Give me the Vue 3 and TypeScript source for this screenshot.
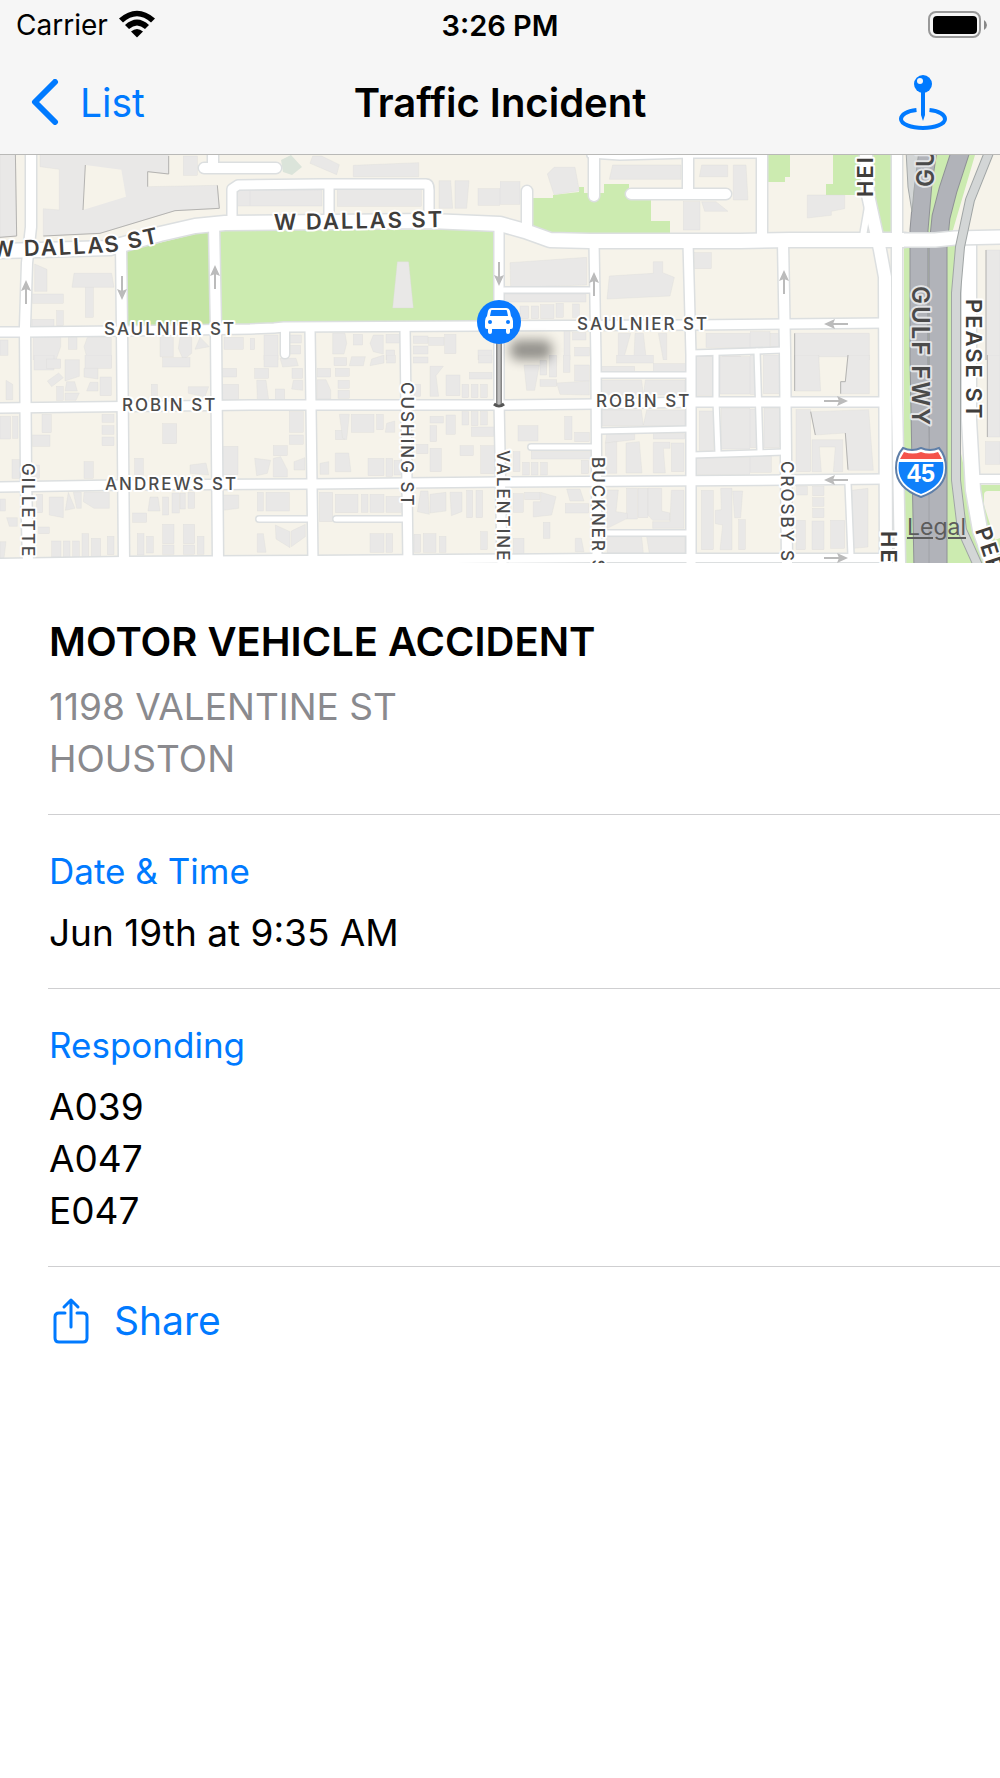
<script setup lang="ts">
interface Tile {
  x: number
  y: number
  rects: number[][]
  polys: string[]
}
interface Label {
  text: string
  x: number
  y: number
  angle: number
  kind: 'minor' | 'major' | 'freeway'
}
interface Road {
  d: string
  w: number
}

const incident = {
  type: 'MOTOR VEHICLE ACCIDENT',
  address: ['1198 VALENTINE ST', 'HOUSTON'],
  when: 'Jun 19th at 9:35 AM',
  units: ['A039', 'A047', 'E047'],
}

const roads: Road[] = [
  // minor lanes
  { d: 'M504 290H592', w: 5 },
  { d: 'M598 375H690', w: 5 },
  { d: 'M598 431L690 429', w: 5 },
  { d: 'M531 447H596', w: 5 },
  { d: 'M598 533H690', w: 5 },
  { d: 'M692 353L783 350', w: 5 },
  { d: 'M692 455L784 452', w: 5 },
  { d: 'M716 353V400L718 453', w: 5 },
  { d: 'M757 351L760 452', w: 5 },
  { d: 'M848 483L851 556', w: 5 },
  { d: 'M259 519H311', w: 5 },
  { d: 'M336 519H406', w: 5 },
  { d: 'M870 195L863 236', w: 6 },
  // east-west streets
  { d: 'M0 332H25L122 331L250 329L274 328L284 327L480 326L692 325L885 323', w: 9 },
  { d: 'M0 408L250 405L500 405L596 404L692 402H885', w: 9 },
  { d: 'M0 487L122 485L312 484L500 482L785 480L885 479', w: 9 },
  { d: 'M0 563L124 561L312 560L598 558L885 558', w: 8 },
  { d: 'M978 479H1000', w: 8 },
  { d: 'M590 155L620 157L690 155H762', w: 5 },
  // north-south streets
  { d: 'M31 155V227L27 263L25 327L26 480L28 563', w: 10 },
  { d: 'M121 243L122 330L124 563', w: 10 },
  { d: 'M214 224L216 330L218 563', w: 10 },
  { d: 'M310 328L313 563', w: 9 },
  { d: 'M285 330V354', w: 8 },
  { d: 'M405 328L408 563', w: 9 },
  { d: 'M499 224V400L502 563', w: 9 },
  { d: 'M594 242L596 360L597 563', w: 9 },
  { d: 'M688 242L691 355V563', w: 9 },
  { d: 'M762 155V240', w: 10 },
  { d: 'M783 242L785 350L787 563', w: 10 },
  // loops and dead ends
  { d: 'M204 168H276M213 155V168', w: 10 },
  { d: 'M232 223V189L238 185L320 184H426Q429 184 429 190V222M329 184V222', w: 9 },
  { d: 'M527 191V232', w: 10 },
  { d: 'M594 155V196', w: 10 },
  { d: 'M631 194H726M688 155V194', w: 10 },
  // main streets
  { d: 'M866 155L868 195L880 250L885 277L886 563', w: 12 },
  { d: 'M897 155V400L900 563', w: 10 },
  { d: 'M969 240V420L973 490L980 530L992 563', w: 14 },
  { d: 'M-5 251L40 250L110 248L160 234L195 226L225 223L430 221L500 224L525 231L550 240L590 241H740L790 240H905', w: 14 },
]

const tiles: Tile[] = [
  {
    x: 0, y: 150,
    rects: [[550, 18, 42, 58], [710, 122, 40, 46], [98, 432, 92, 28], [170, 482, 20, 45], [96, 508, 66, 22], [256, 410, 24, 92], [0, 570, 24, 46], [205, 562, 26, 36], [672, 562, 58, 36]],
    polys: ['M0 0H46L50 258L0 262z', 'M120 0H506V72L443 65V110L652 106L658 175L525 182L300 250L130 258V176L178 180V58L120 50z', 'M104 342L141 358V424H104z', 'M222 370H335L342 412H216z', 'M100 562H182V590L168 630H100z', 'M262 562H334V630H262L252 590z', 'M480 562H520V620H480z', 'M540 562H575V610L550 630L535 595z', 'M600 562L628 590L585 598z'],
  },
  {
    x: 250, y: 150,
    rects: [[0, 120, 216, 48], [262, 117, 252, 52], [684, 116, 66, 50], [0, 565, 14, 34], [42, 555, 42, 75], [118, 555, 36, 24], [122, 586, 30, 26], [310, 553, 28, 32], [408, 553, 40, 26], [408, 600, 26, 30], [490, 558, 44, 22], [490, 588, 44, 24], [536, 562, 46, 24], [584, 553, 34, 58], [684, 600, 42, 30]],
    polys: ['M188 18H215L268 44L260 74L180 40z', 'M310 46L506 38V80H310z', 'M567 92H602L608 175H567z', 'M615 92H657L650 175H615z', 'M442 335H476L490 474H428z', 'M248 550H285L290 580L282 612H248z', 'M370 555H400V612L370 605L360 580z'],
  },
  {
    x: 500, y: 150,
    rects: [[0, 95, 60, 68], [550, 155, 50, 85], [584, 308, 50, 48], [14, 432, 244, 24], [60, 468, 26, 38], [94, 468, 22, 38], [122, 464, 40, 42], [168, 460, 22, 42], [218, 462, 20, 40], [192, 545, 18, 85], [218, 548, 40, 22], [224, 592, 44, 26], [618, 550, 132, 42], [600, 618, 40, 12], [668, 618, 54, 12]],
    polys: ['M162 52H225L238 122L162 134L142 72z', 'M338 45H543V88H328z', 'M605 45H683V80H598z', 'M700 45H738L744 150H700z', 'M605 155H648L684 184H614z', 'M30 338L260 322V405L32 412z', 'M328 378L460 370V335H488V368L523 382L510 438L321 447z', 'M355 550H392L370 630H355z', 'M405 550H430L438 620H402z', 'M475 550H500V630H490z'],
  },
  {
    x: 750, y: 150,
    rects: [[708, 300, 42, 330], [0, 545, 60, 48], [62, 550, 26, 40]],
    polys: ['M172 135H284V176L244 184V196L172 204z', 'M134 550H358V630H294V620H206V630H134z'],
  },
  {
    x: 0, y: 355,
    rects: [[102, 0, 60, 45], [140, 12, 42, 28], [255, 0, 80, 40], [488, 8, 82, 28], [170, 94, 20, 42], [300, 66, 34, 56], [454, 88, 18, 40], [668, 40, 42, 26], [668, 88, 48, 46], [0, 184, 32, 68], [38, 184, 16, 66], [126, 178, 28, 55], [98, 240, 52, 34], [306, 178, 36, 24], [306, 212, 36, 26], [306, 246, 36, 26], [488, 206, 42, 60], [252, 320, 28, 50], [404, 310, 26, 52], [668, 274, 46, 85], [36, 314, 24, 56], [98, 330, 20, 40], [0, 432, 16, 36], [110, 418, 18, 55], [116, 516, 32, 20], [398, 474, 42, 28], [488, 426, 18, 54], [564, 412, 20, 48], [516, 414, 22, 60], [155, 558, 28, 48], [190, 558, 20, 48], [218, 558, 20, 48], [246, 536, 20, 70], [274, 550, 28, 56], [322, 544, 20, 55], [412, 536, 20, 64], [440, 544, 20, 50], [488, 508, 34, 58], [550, 508, 34, 58], [488, 570, 34, 28], [550, 570, 34, 28], [592, 544, 20, 54]],
    polys: ['M142 78L176 54L190 68L155 95z', 'M195 14H238V64L195 78z', 'M200 80H224L232 108H195z', 'M195 114H238L228 136H195z', 'M252 40H294V72L252 66z', 'M270 82H294V108H260z', 'M565 95H626L615 125L565 115z', 'M18 76L38 88V134H18z', 'M20 488H52V514H28z', 'M148 426H190V488L148 480z', 'M205 412L225 460L196 466z', 'M220 412H244V460H230z', 'M252 412H328V460H282L250 440z', 'M450 426H474L480 468H444z', 'M570 330L618 324L626 360L570 355z', 'M668 420H716V460L668 466z', 'M0 560H18L12 610H0z', 'M540 414H556V462H540z'],
  },
  {
    x: 250, y: 355,
    rects: [[42, 0, 42, 36], [252, 8, 38, 24], [410, 0, 26, 24], [490, 6, 44, 18], [686, 0, 40, 24], [14, 40, 42, 30], [126, 40, 32, 30], [76, 102, 28, 32], [202, 40, 40, 26], [256, 40, 42, 24], [264, 76, 34, 24], [264, 106, 34, 24], [588, 60, 42, 62], [658, 52, 68, 20], [636, 88, 20, 40], [664, 88, 20, 40], [692, 88, 20, 40], [492, 88, 20, 36], [118, 170, 42, 62], [118, 240, 42, 28], [304, 178, 68, 54], [380, 178, 20, 46], [256, 226, 30, 28], [540, 184, 40, 20], [588, 180, 28, 58], [540, 212, 20, 48], [636, 170, 20, 40], [664, 170, 20, 42], [692, 170, 20, 40], [664, 216, 68, 28], [630, 272, 40, 30], [692, 272, 42, 84], [540, 280, 34, 70], [500, 268, 34, 28], [70, 272, 42, 30], [354, 310, 48, 52], [408, 310, 20, 54], [432, 316, 22, 44], [22, 412, 18, 56], [48, 412, 70, 56], [208, 412, 40, 88], [256, 418, 68, 55], [334, 418, 20, 54], [360, 418, 42, 54], [408, 424, 46, 48], [650, 406, 18, 82], [678, 406, 20, 82], [360, 536, 42, 56], [408, 536, 20, 56], [492, 538, 20, 54], [520, 536, 38, 56], [568, 544, 20, 48], [692, 530, 20, 54]],
    polys: ['M90 10H138L145 32L98 36z', 'M305 5H346L340 32H298z', 'M365 12L402 0V24L360 32z', 'M20 76H48L56 134H22z', 'M130 76H158V106L125 102z', 'M202 74H228L242 105V132H202z', 'M540 34H580L558 62L566 124H540z', 'M268 178H298L290 254L278 250z', 'M410 205L434 198V232H406z', 'M14 310L62 316L52 355L20 362z', 'M70 310L92 305L112 344V366H70z', 'M132 320L165 308V345H132z', 'M256 294H296L303 350H256z', 'M210 325L236 320V358H210z', 'M76 510L120 530V578L78 552z', 'M124 528L166 508V545L124 575z', 'M22 536H40L48 592H22z', 'M512 408H534L538 478L502 470z', 'M540 418L588 412V468L540 474z', 'M600 412H636V470L604 482z'],
  },
  {
    x: 500, y: 355,
    rects: [[120, 16, 20, 44], [148, 0, 22, 66], [190, 0, 20, 52], [224, 30, 44, 48], [120, 74, 50, 20], [54, 212, 60, 46], [194, 184, 22, 70], [224, 232, 44, 28], [94, 290, 180, 22], [68, 322, 20, 38], [94, 322, 20, 38], [122, 322, 20, 38], [244, 316, 22, 40], [40, 290, 20, 60], [304, 34, 100, 18], [350, 0, 110, 24], [460, 26, 96, 24], [590, 5, 48, 116], [660, 5, 90, 112], [598, 168, 42, 118], [664, 160, 86, 122], [588, 308, 162, 50], [604, 406, 36, 178], [716, 494, 20, 90], [414, 400, 30, 88], [380, 400, 32, 92], [514, 264, 38, 86], [460, 236, 94, 16], [74, 412, 46, 22], [130, 502, 20, 48], [196, 446, 70, 28], [40, 416, 30, 56], [40, 550, 32, 46]],
    polys: ['M72 30H118L104 106H80z', 'M170 84L268 78V120L180 118z', 'M304 75H425L430 122L436 75H555V120H304z', 'M306 165H424L430 210L440 165H555V212H306z', 'M320 236H404V254L316 264z', 'M316 264L350 260V355H318z', 'M378 264L418 260L426 354H378z', 'M460 262H510V280H490L496 354H460z', 'M320 405H355L348 470L382 475V490L322 520z', 'M444 400H485V468L510 474V496H458L444 480z', 'M514 406H552V520H458V500H510z', 'M320 545H425L430 594H322z', 'M440 545H555V595H448z', 'M662 400H696V584H660L668 510L646 506V466L664 464z', 'M698 408H728L722 488H704z', 'M122 412L168 425L155 480L100 486V440H122z', 'M200 402H240L252 438H210z', 'M226 550H244L252 590H226z'],
  },
  {
    x: 750, y: 355,
    rects: [[0, 0, 22, 118], [40, 0, 48, 116], [0, 162, 22, 116], [42, 160, 46, 118], [0, 304, 64, 48], [712, 0, 38, 246], [706, 260, 44, 68], [138, 164, 44, 186], [188, 394, 34, 28], [188, 428, 34, 26], [188, 460, 34, 28], [138, 496, 28, 88], [186, 498, 36, 86], [242, 496, 42, 84], [140, 394, 32, 26]],
    polys: ['M134 0H206L212 108H134z', 'M294 0H358V116H272V80H286z', 'M182 170L356 164L370 346H294L286 234L196 240z', 'M186 254H278V350H250L256 276H208L214 350H186z', 'M305 406L354 400V576L310 580z'],
  },
]

const arrows = [
  { x: 26, y: 292, a: 0 }, { x: 122, y: 288, a: 180 }, { x: 215, y: 277, a: 0 },
  { x: 499, y: 274, a: 180 }, { x: 594, y: 284, a: 0 }, { x: 784, y: 282, a: 0 },
  { x: 836, y: 324, a: -90 }, { x: 836, y: 401, a: 90 }, { x: 836, y: 480, a: -90 }, { x: 836, y: 558, a: 90 },
]

const labels: Label[] = [
  { text: 'W DALLAS ST', x: 274, y: 230, angle: -1, kind: 'major' },
  { text: 'SAULNIER ST', x: 104, y: 335, angle: 0, kind: 'minor' },
  { text: 'SAULNIER ST', x: 577, y: 330, angle: 0, kind: 'minor' },
  { text: 'ROBIN ST', x: 122, y: 411, angle: 0, kind: 'minor' },
  { text: 'ROBIN ST', x: 596, y: 407, angle: 0, kind: 'minor' },
  { text: 'ANDREWS ST', x: 105, y: 490, angle: 0, kind: 'minor' },
  { text: 'CUSHING ST', x: 401, y: 382, angle: 90, kind: 'minor' },
  { text: 'VALENTINE', x: 497, y: 450, angle: 90, kind: 'minor' },
  { text: 'BUCKNER S', x: 592, y: 457, angle: 90, kind: 'minor' },
  { text: 'CROSBY S', x: 781, y: 461, angle: 90, kind: 'minor' },
  { text: 'GILLETTE', x: 22, y: 463, angle: 90, kind: 'minor' },
  { text: 'HEI', x: 873, y: 197, angle: -90, kind: 'major' },
  { text: 'HE', x: 881, y: 531, angle: 90, kind: 'major' },
  { text: 'PEASE ST', x: 966, y: 299, angle: 90, kind: 'major' },
  { text: 'PER', x: 975, y: 530, angle: 72, kind: 'major' },
  { text: 'GULF FWY', x: 912, y: 286, angle: 90, kind: 'freeway' },
  { text: 'GU', x: 934, y: 187, angle: -90, kind: 'freeway' },
]
</script>

<template>
  <div class="screen">
    <header class="top">
      <div class="status">
        <div class="carrier">
          <span>Carrier</span>
          <svg class="wifi" width="38" height="28" viewBox="0 0 38 28" aria-hidden="true">
            <path d="M1 8.500Q19-7 37 8.500L33 12.500Q19 0 5 12.500z" />
            <path d="M7 15Q19 4 31 15L27 19Q19 12 11 19z" />
            <path d="M13 21.500Q19 16.500 25 21.500L19.500 27Q19 27.500 18.500 27z" />
          </svg>
        </div>
        <time class="clock">3:26 PM</time>
        <svg class="battery" width="60" height="28" viewBox="0 0 60 28" aria-hidden="true">
          <rect x="1" y="1" width="51" height="25" rx="7" fill="none" stroke="#999" stroke-width="2" />
          <rect x="5" y="5" width="44" height="18" rx="4" />
          <path d="M56 9Q59 11 59 14Q59 17 56 19z" fill="#888" />
        </svg>
      </div>
      <nav class="bar">
        <button class="back" type="button">
          <svg width="28" height="46" viewBox="0 0 28 46" aria-hidden="true">
            <path d="M24 3L4 23L24 43" fill="none" stroke="currentColor" stroke-width="6" stroke-linecap="round" stroke-linejoin="round" />
          </svg>
          <span>List</span>
        </button>
        <h1 class="heading">Traffic Incident</h1>
        <button class="locate" type="button" aria-label="Show location">
          <svg width="50" height="56" viewBox="0 0 50 56" aria-hidden="true">
            <path d="M18.500 36C9 37 3 40.500 3 45C3 50 13 54 25 54S47 50 47 45C47 40.500 41 37 31.500 36" fill="none" stroke="currentColor" stroke-width="4" />
            <path d="M23 16H27V41L25 47L23 41z" fill="currentColor" />
            <circle cx="25" cy="10" r="9" fill="currentColor" />
            <circle cx="22" cy="7" r="3" fill="#f6f6f6" />
          </svg>
        </button>
      </nav>
    </header>

    <section class="map" aria-label="Incident location">
      <svg class="canvas" viewBox="0 155 1000 408">
        <defs>
          <path id="dallas-curve" d="M-8 257L60 255L112 252Q132 249 180 238" />
          <filter id="soft" x="-50%" y="-100%" width="200%" height="300%"><feGaussianBlur stdDeviation="6" /></filter>
          <linearGradient id="stick"><stop offset="0" stop-color="#777" /><stop offset="0.500" stop-color="#ccc" /><stop offset="1" stop-color="#777" /></linearGradient>
        </defs>
        <rect y="155" width="1000" height="408" fill="#f6f3ea" />

        <!-- parks -->
        <path d="M122 252L212 230V326H122z" fill="#c3e4a3" />
        <path d="M218 230H497V324L280 323L270 328H218z" fill="#ccebb0" />
        <path d="M530 198H553V195L579 192V187H584V193H604V184H629V200H651V221H670V238H550L530 230z" fill="#ccebb0" />
        <path d="M768 155H790V177H785V182H768zM833 155H892V234H882L866 195H826V184H833z" fill="#ccebb0" />
        <path d="M904 242H958V440L985 563H904zM935 155H975L950 240H925z" fill="#ccebb0" />
        <path d="M281 160L291 155L302 167L292 175L283 172z" fill="#dbe4da" />
        <path d="M980 485H1000V563H990L978 520z" fill="#ccebb0" />
        <path d="M984 495Q984 491 988 491H1000V538L995 540L984 505z" fill="#f6f3ea" />

        <!-- buildings -->
        <svg v-for="(t, i) in tiles" :key="'t' + i" :x="t.x" :y="t.y" width="250" height="210" viewBox="0 0 750 630">
          <g class="building">
            <rect v-for="(r, j) in t.rects" :key="'r' + j" :x="r[0]" :y="r[1]" :width="r[2]" :height="r[3]" />
            <path v-for="(p, j) in t.polys" :key="'p' + j" :d="p" />
          </g>
          <g v-if="i === 0" class="edge">
            <path d="M46 0L50 258L0 262M506 18V72L443 65V110M652 106L658 175L525 182L300 250L130 258" />
            <path d="M256 45L364 59L378 140L249 180z" class="yard" />
            <path d="M256 45L249 180" />
          </g>
          <path v-if="i === 3" class="edge" d="M708 300V630M134 550V630" />
          <path v-if="i === 7" class="edge" d="M712 0V246M134 0V108M294 0L286 80H272V116M182 170L196 240M286 234L294 344" />
        </svg>

        <!-- streets: outline first, then the white surface -->
        <g class="roads casing">
          <path v-for="(r, i) in roads" :key="'c' + i" :d="r.d" :stroke-width="r.w + 3" />
        </g>
        <g class="roads surface">
          <path v-for="(r, i) in roads" :key="'s' + i" :d="r.d" :stroke-width="r.w" />
        </g>

        <!-- freeway -->
        <g class="roads">
          <path d="M928 150L923 183L919 230V360L923 570" stroke="#8f9196" stroke-width="19" />
          <path d="M961 150L948 190L941 217L938 247V570" stroke="#8f9196" stroke-width="19" />
          <path d="M928 150L923 183L919 230V360L923 570M961 150L948 190L941 217L938 247V570" stroke="#b1b3b9" stroke-width="17" />
          <path d="M906 150H919L914 190L912 212L908 187z" fill="#d3d6d6" stroke="#a5a9a9" />
          <path d="M929 248V563" stroke="#a0a2a7" stroke-width="1" />
          <path d="M904 240H935L955 238L1005 237" stroke="#dcdfe0" stroke-width="16" />
          <path d="M900 240H935L955 238L1005 237" stroke="#fff" stroke-width="13" />
          <path d="M990 150L970 200L960 247L956 293V480L962 530L980 570" stroke="#a0a5a5" stroke-width="10" />
          <path d="M990 150L970 200L960 247L956 293V480L962 530L980 570" stroke="#d3d6d6" stroke-width="8" />
        </g>

        <g v-for="(a, i) in arrows" :key="'a' + i" :transform="`translate(${a.x} ${a.y}) rotate(${a.a})`" class="arrow">
          <path d="M0 12V-4" />
          <path d="M0 -12L5 -1L0 -3L-5 -1z" class="head" />
        </g>

        <!-- street names -->
        <text class="label major"><textPath href="#dallas-curve">W DALLAS ST</textPath></text>
        <text
          v-for="(l, i) in labels"
          :key="'l' + i"
          :class="['label', l.kind]"
          :transform="`translate(${l.x} ${l.y}) rotate(${l.angle})`"
        >{{ l.text }}</text>

        <!-- interstate shield -->
        <g transform="translate(921 472)">
          <path d="M-18 -24Q-9 -20 0 -24Q9 -20 18 -24Q25 -16 25 -4C25 12 14 20 0 25C-14 20 -25 12 -25 -4Q-25 -16 -18 -24z" fill="#fff" stroke="#5f7fa8" stroke-width="2" />
          <path d="M-17 -20Q-8 -17 0 -20Q8 -17 17 -20L21 -13H-21z" fill="#f4534b" />
          <path d="M-22 -10H22C25 8 13 17 0 22C-13 17 -25 8 -22 -10z" fill="#1080fa" />
          <text class="shield" y="10" text-anchor="middle">45</text>
        </g>

        <!-- incident pin -->
        <rect x="510" y="340" width="42" height="20" rx="8" fill="#000" opacity="0.400" filter="url(#soft)" />
        <rect x="496" y="340" width="6" height="64" fill="url(#stick)" />
        <path d="M494 404Q499 408 504 404" fill="none" stroke="#555" stroke-width="3" />
        <g transform="translate(499 322)">
          <circle r="22" fill="#0a7aff" />
          <path d="M-7 -14H7Q10 -14 11 -11L12 -6Q14 -4 14 -1V5Q14 7 12 7H11V10Q11 12 9 12T7 10V7H-7V10Q-7 12 -9 12T-11 10V7H-12Q-14 7 -14 5V-1Q-14 -4 -12 -6L-11 -11Q-10 -14 -7 -14z" fill="#fff" />
          <path d="M-7 -12H7Q8 -12 8 -11L9 -6H-9L-8 -11Q-8 -12 -7 -12z" fill="#0a7aff" />
          <circle cx="-9" cy="0" r="2" fill="#0a7aff" />
          <circle cx="9" cy="0" r="2" fill="#0a7aff" />
        </g>
      </svg>
      <a class="legal" href="#legal">Legal</a>
    </section>

    <main class="details">
      <section class="group">
        <h2 class="type">{{ incident.type }}</h2>
        <p v-for="line in incident.address" :key="line" class="line muted">{{ line }}</p>
      </section>
      <section class="group">
        <h3 class="caption">Date &amp; Time</h3>
        <p class="line">{{ incident.when }}</p>
      </section>
      <section class="group">
        <h3 class="caption">Responding</h3>
        <p v-for="unit in incident.units" :key="unit" class="line">{{ unit }}</p>
      </section>
      <button class="share" type="button">
        <svg width="38" height="48" viewBox="0 0 38 48" aria-hidden="true">
          <path d="M13 16H7Q3 16 3 20V41Q3 45 7 45H31Q35 45 35 41V20Q35 16 31 16H25M19 30V3M12 10L19 3L26 10" fill="none" stroke="currentColor" stroke-width="3" stroke-linecap="round" stroke-linejoin="round" />
        </svg>
        <span>Share</span>
      </button>
    </main>
  </div>
</template>

<style>
body {
  background: #fff;
}
</style>

<style scoped>
.screen {
  font-family: Inter, "Liberation Sans", sans-serif;
  color: #000;
  overflow: hidden;
}
h1, h2, h3, p {
  margin: 0;
  font-weight: 400;
}
button {
  border: 0;
  padding: 0;
  background: none;
  font: inherit;
  color: #007aff;
}
svg {
  display: block;
}
.top {
  background: #f6f6f6;
  border-bottom: 1px solid #b9b9b7;
}
.status {
  display: grid;
  grid-template-columns: 1fr auto 1fr;
  align-items: center;
  height: 50px;
  padding: 0 12px;
  font-size: 28px;
}
.carrier {
  display: flex;
  align-items: center;
  gap: 10px;
  padding-left: 4px;
}
.wifi {
  margin-bottom: 2px;
}
.clock {
  font-size: 29px;
  font-weight: 600;
}
.battery {
  justify-self: end;
}
.bar {
  display: grid;
  grid-template-columns: 1fr auto 1fr;
  align-items: center;
  height: 104px;
  padding: 0 31px;
  font-size: 39px;
}
.back {
  display: flex;
  align-items: center;
  gap: 21px;
  justify-self: start;
}
.heading {
  font-size: 40px;
  font-weight: 600;
}
.locate {
  justify-self: end;
  margin-right: 21px;
}
.map {
  position: relative;
}
.canvas {
  width: 100%;
  height: auto;
}
.building {
  fill: #e9e8e7;
  stroke: #dcdbd9;
  stroke-width: 1;
}
.edge {
  fill: none;
  stroke: #b4b3b1;
  stroke-width: 3;
}
.yard {
  fill: #f6f3ea;
  stroke: none;
}
.roads {
  fill: none;
  stroke-linejoin: round;
}
.casing {
  stroke: #dcdfe0;
  stroke-linecap: round;
}
.surface {
  stroke: #fff;
  stroke-linecap: round;
}
.arrow {
  fill: none;
  stroke: #bbb;
  stroke-width: 2;
}
.head {
  fill: #bbb;
  stroke: none;
}
.label {
  fill: #4b4b4b;
  stroke: #fff;
  stroke-width: 4;
  stroke-linejoin: round;
  paint-order: stroke;
  letter-spacing: 2px;
}
.minor {
  font-size: 17px;
  font-weight: 500;
}
.major {
  font-size: 22px;
  font-weight: 600;
  fill: #3f3d3b;
}
.freeway {
  font-size: 24px;
  font-weight: 600;
  stroke: #e3e4e6;
}
.shield {
  fill: #fff;
  font-size: 25px;
  font-weight: 700;
  font-family: "Liberation Sans", sans-serif;
}
.legal {
  position: absolute;
  right: 34px;
  bottom: 22px;
  color: #5c5c5c;
  font-size: 23px;
  line-height: 28px;
}
.details {
  padding: 49px 0 0 48px;
}
.group {
  padding: 0 0 29px 1px;
  margin-bottom: 34px;
  border-bottom: 1px solid #cfcfd1;
}
.type {
  margin-bottom: 9px;
  font-size: 40px;
  font-weight: 600;
  line-height: 60px;
}
.caption {
  margin-bottom: 14px;
  color: #007aff;
  font-size: 35px;
  line-height: 44px;
}
.line {
  font-size: 37px;
  line-height: 52px;
}
.muted {
  color: #8a8a8e;
}
.share {
  display: flex;
  align-items: center;
  gap: 24px;
  padding-left: 4px;
  margin-top: -4px;
  font-size: 39px;
  line-height: 48px;
}
</style>
